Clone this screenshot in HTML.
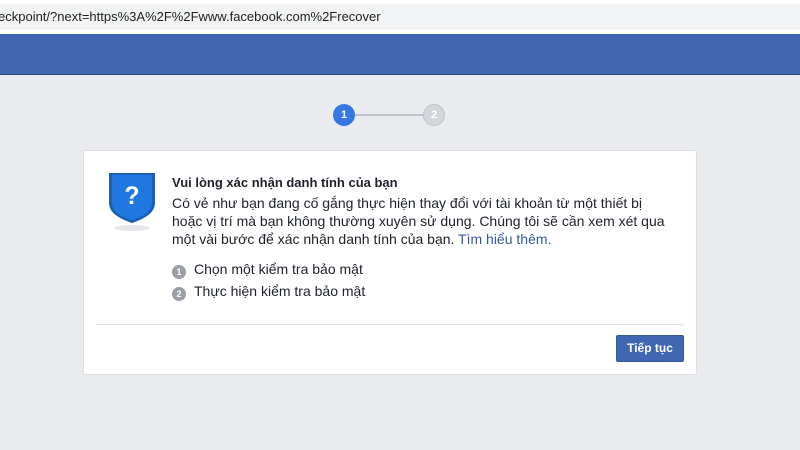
<!DOCTYPE html>
<html><head><meta charset="utf-8"><style>
body{margin:0;width:800px;height:450px;background:#e9ebee;font-family:"Liberation Sans",Arial,sans-serif;position:relative;overflow:hidden}
.addr{position:absolute;left:0;top:0;width:800px;height:34px;background:#fff}
.addr div{position:absolute;left:0;top:4px;width:800px;height:26px;background:#f1f3f4;font-size:13px;color:#222;line-height:26px;text-indent:-2px}
.bar{position:absolute;left:0;top:34px;width:800px;height:40px;background:#4267b2;border-bottom:1px solid #29487d}
.c{position:absolute;width:22px;height:22px;border-radius:50%;color:#fff;font-size:11px;font-weight:bold;text-align:center;line-height:22px}
.card{position:absolute;left:83px;top:150px;width:612px;height:223px;background:#fff;border:1px solid #dddfe2;border-radius:3px}
.t{position:absolute;left:88px;top:24px;font-size:13px;font-weight:bold;color:#1d2129}
.p{position:absolute;left:88px;top:43px;width:500px;font-size:14px;line-height:18px;color:#1d2129}
.li{position:absolute;left:88px;font-size:14px;color:#1d2129}
.li span{display:inline-block;width:14px;height:14px;border-radius:50%;background:#9a9fa7;color:#fff;font-size:9px;font-weight:bold;text-align:center;line-height:14px;margin-right:8px;vertical-align:-1px}
.hr{position:absolute;left:12px;right:12px;top:173px;border-top:1px solid #dddfe2}
.btn{position:absolute;left:532px;top:184px;width:66px;height:25px;background:#4267b2;border:1px solid #365899;color:#fff;font-size:12px;font-weight:bold;text-align:center;line-height:25px;border-radius:2px}
</style></head><body>
<div class="addr"><div>eckpoint/?next=https%3A%2F%2Fwww.facebook.com%2Frecover</div></div>
<div class="bar"></div>
<div style="position:absolute;left:355px;top:114px;width:70px;height:2px;background:#bec3c9"></div>
<div class="c" style="left:333px;top:104px;background:#3578e5">1</div>
<div class="c" style="left:423px;top:104px;background:#d3d6db;border:1px solid #bec3c9;width:20px;height:20px;line-height:20px">2</div>
<div class="card">
<svg style="position:absolute;left:24px;top:20px" width="48" height="62" viewBox="0 0 48 62">
<ellipse cx="24" cy="57" rx="18" ry="3" fill="#e4e6e9"/>
<path d="M1 2H47V32C47 42 36 48 24 52C12 48 1 42 1 32Z" fill="#1a5fb4"/>
<path d="M4 4H44V32C44 40 35 46 24 49C13 46 4 40 4 32Z" fill="#1e78e0"/>
<text x="24" y="33" font-family="Liberation Sans" font-weight="bold" font-size="25" fill="#fff" text-anchor="middle">?</text>
</svg>
<div class="t">Vui lòng xác nhận danh tính của bạn</div>
<div class="p">Có vẻ như bạn đang cố gắng thực hiện thay đổi với tài khoản từ một thiết bị hoặc vị trí mà bạn không thường xuyên sử dụng. Chúng tôi sẽ cần xem xét qua một vài bước để xác nhận danh tính của bạn. <span style="color:#365899">Tìm hiểu thêm.</span></div>
<div class="li" style="top:110px"><span>1</span>Chọn một kiểm tra bảo mật</div>
<div class="li" style="top:132px"><span>2</span>Thực hiện kiểm tra bảo mật</div>
<div class="hr"></div>
<div class="btn">Tiếp tục</div>
</div>
</body></html>
